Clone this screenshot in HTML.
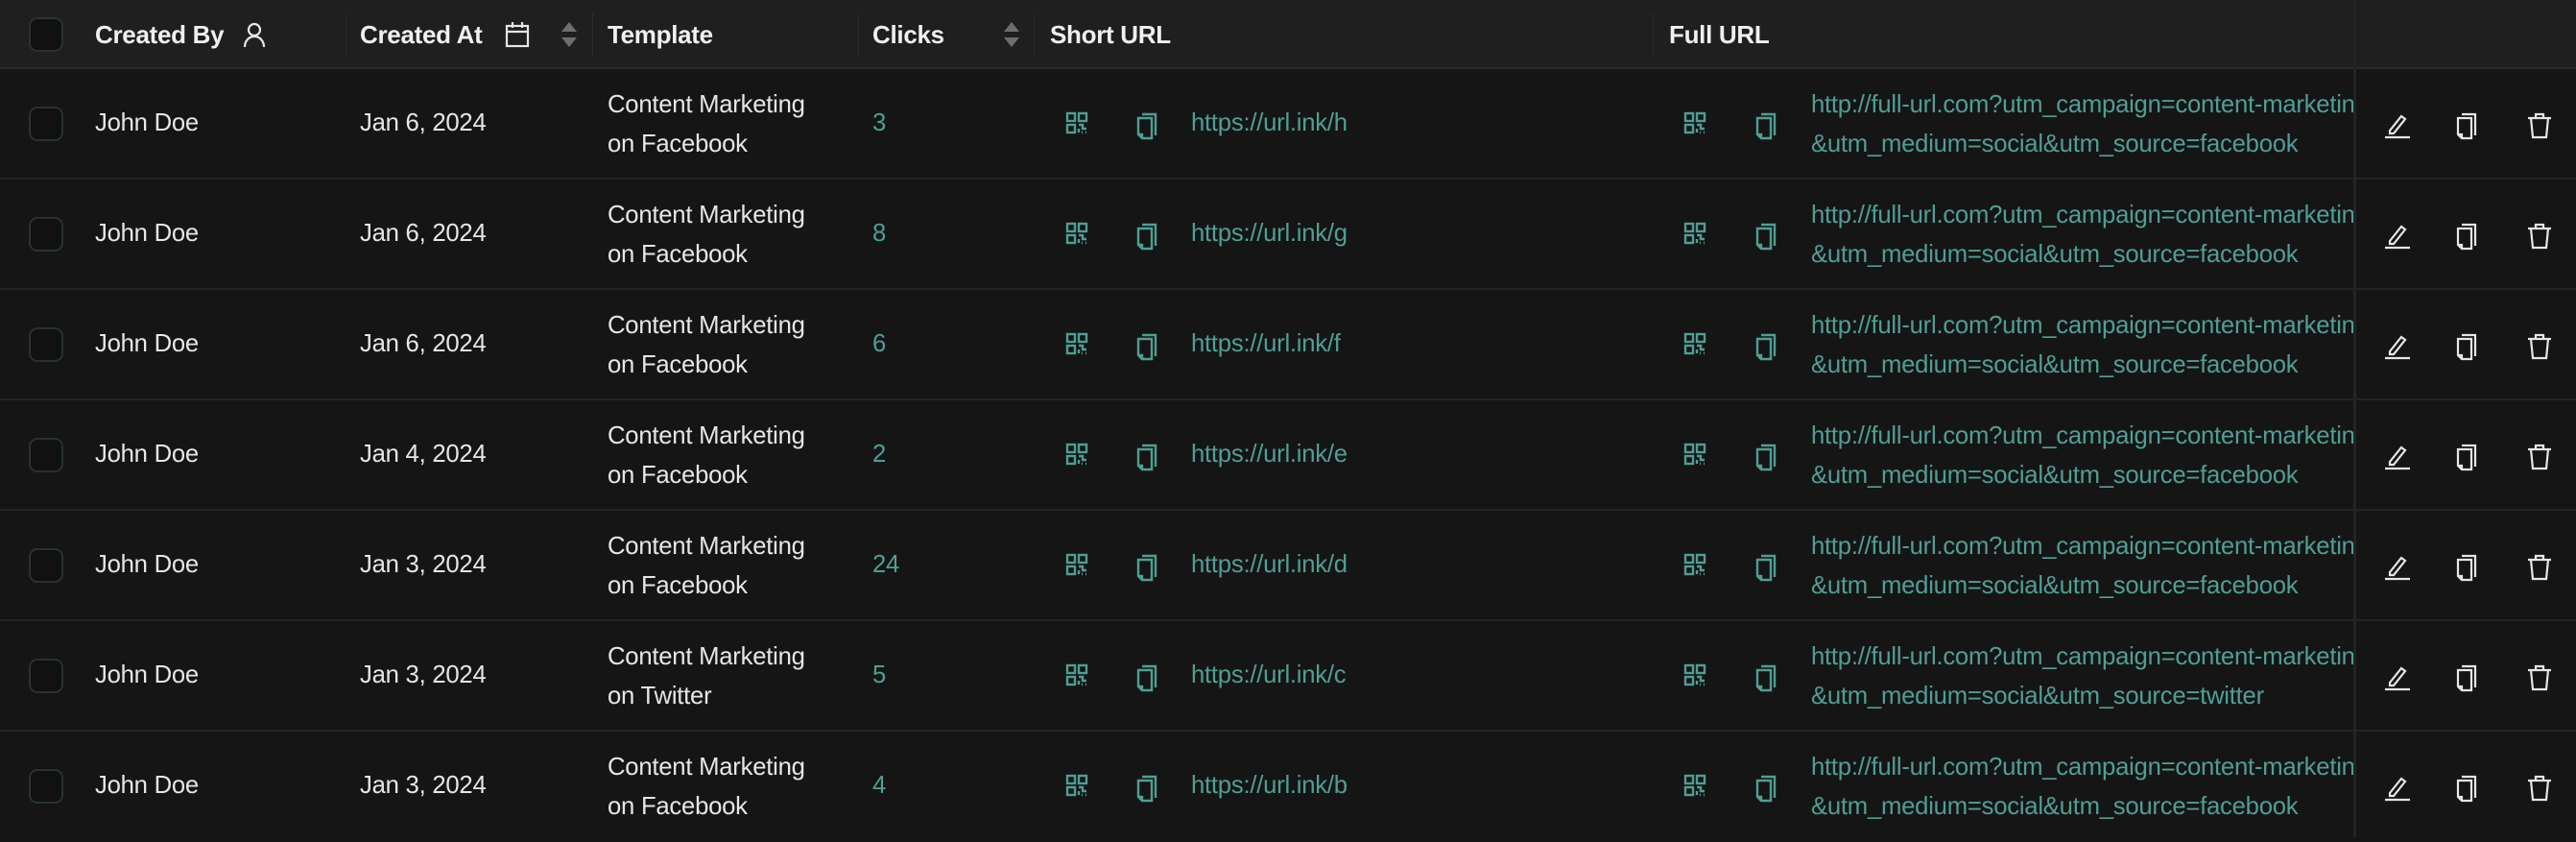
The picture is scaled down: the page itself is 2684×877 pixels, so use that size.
<!DOCTYPE html>
<html><head><meta charset="utf-8">
<style>
*{margin:0;padding:0;box-sizing:border-box}
body{width:2684px;height:872px;background:#151515;overflow:hidden;font-family:"Liberation Sans",sans-serif;color:#e6e6e6;position:relative}
.hdr{position:absolute;left:0;top:0;width:2684px;height:72px;background:#1f1f1f;border-bottom:2px solid #2a2a2a}
.hdr .t{position:absolute;top:0;line-height:72px;font-size:26px;font-weight:bold;color:#f0f0f0;letter-spacing:-0.3px}
.vd{position:absolute;top:14px;width:1px;height:44px;background:#2c2c2c}
.cb{position:absolute;left:30px;width:36px;height:36px;border:2px solid #27332f;border-radius:9px;background:#111}
.row{position:absolute;left:0;width:2684px;height:115px;border-bottom:2px solid #242424;background:#151515}
.row .t{position:absolute;font-size:25.7px;letter-spacing:-0.25px}
.one{top:0;line-height:113px}
.two{top:17px;line-height:41px}
.teal{color:#4f9e94}
.ic{position:absolute;top:44px}
</style></head><body>
<div class="hdr">
<div class="cb" style="top:18px"></div>
<div class="t" style="left:99px">Created By</div>
<svg style="position:absolute;left:252px;top:22px" width="26" height="28" viewBox="0 0 26 28" fill="none" stroke="#e6e6e6" stroke-width="2.2"><circle cx="13" cy="9" r="6"/><path d="M3 27c0-6 4-11 10-11s10 5 10 11"/></svg>
<div class="vd" style="left:360px"></div>
<div class="t" style="left:375px">Created At</div>
<svg style="position:absolute;left:526px;top:22px" width="26" height="28" viewBox="0 0 26 28" fill="none" stroke="#e6e6e6" stroke-width="2.2"><rect x="2" y="5" width="22" height="21"/><path d="M2 11h22M8 1v6M18 1v6"/></svg>
<svg style="position:absolute;left:584px;top:23px" width="18" height="26" viewBox="0 0 18 26"><path d="M9 0L17 10H1Z M9 26L17 16H1Z" fill="#6e6e6e"/></svg>
<div class="vd" style="left:617px"></div>
<div class="t" style="left:633px">Template</div>
<div class="vd" style="left:894px"></div>
<div class="t" style="left:909px">Clicks</div>
<svg style="position:absolute;left:1045px;top:23px" width="18" height="26" viewBox="0 0 18 26"><path d="M9 0L17 10H1Z M9 26L17 16H1Z" fill="#6e6e6e"/></svg>
<div class="vd" style="left:1077px"></div>
<div class="t" style="left:1094px">Short URL</div>
<div class="vd" style="left:1722px"></div>
<div class="t" style="left:1739px">Full URL</div>
</div>

<svg width="0" height="0" style="position:absolute">
<defs>
<g id="qr" fill="none" stroke="#4f9e94" stroke-width="2.4"><rect x="2" y="2" width="8" height="8"/><rect x="14" y="2" width="8" height="8"/><rect x="2" y="14" width="8" height="8"/><path d="M14 14h4v4h4M14 18v4M17 22h1M21 22h1"/></g>
<g id="cp" fill="none" stroke-width="2.4"><path d="M7 3h14v22"/><path d="M3 7h14v21H7l-4-4Z"/><path d="M3 24h4v4"/></g>
</defs></svg>

<div class="row" style="top:72px">
<div class="cb" style="top:39px"></div>
<div class="t one" style="left:99px">John Doe</div>
<div class="t one" style="left:375px">Jan 6, 2024</div>
<div class="t two" style="left:633px">Content Marketing<br>on Facebook</div>
<div class="t one teal" style="left:909px">3</div>
<svg class="ic" style="left:1110px" width="26" height="26"><use href="#qr"/></svg>
<svg class="ic" style="left:1183px" width="26" height="30"><use href="#cp" stroke="#4f9e94"/></svg>
<div class="t one teal" style="left:1241px">https://url.ink/h</div>
<svg class="ic" style="left:1754px" width="26" height="26"><use href="#qr"/></svg>
<svg class="ic" style="left:1828px" width="26" height="30"><use href="#cp" stroke="#4f9e94"/></svg>
<div class="t two teal" style="left:1887px;width:565px;overflow:hidden;white-space:nowrap">http://full-url.com?utm_campaign=content-marketing<br>&amp;utm_medium=social&amp;utm_source=facebook</div>
</div>

<div class="row" style="top:187px">
<div class="cb" style="top:39px"></div>
<div class="t one" style="left:99px">John Doe</div>
<div class="t one" style="left:375px">Jan 6, 2024</div>
<div class="t two" style="left:633px">Content Marketing<br>on Facebook</div>
<div class="t one teal" style="left:909px">8</div>
<svg class="ic" style="left:1110px" width="26" height="26"><use href="#qr"/></svg>
<svg class="ic" style="left:1183px" width="26" height="30"><use href="#cp" stroke="#4f9e94"/></svg>
<div class="t one teal" style="left:1241px">https://url.ink/g</div>
<svg class="ic" style="left:1754px" width="26" height="26"><use href="#qr"/></svg>
<svg class="ic" style="left:1828px" width="26" height="30"><use href="#cp" stroke="#4f9e94"/></svg>
<div class="t two teal" style="left:1887px;width:565px;overflow:hidden;white-space:nowrap">http://full-url.com?utm_campaign=content-marketing<br>&amp;utm_medium=social&amp;utm_source=facebook</div>
</div>

<div class="row" style="top:302px">
<div class="cb" style="top:39px"></div>
<div class="t one" style="left:99px">John Doe</div>
<div class="t one" style="left:375px">Jan 6, 2024</div>
<div class="t two" style="left:633px">Content Marketing<br>on Facebook</div>
<div class="t one teal" style="left:909px">6</div>
<svg class="ic" style="left:1110px" width="26" height="26"><use href="#qr"/></svg>
<svg class="ic" style="left:1183px" width="26" height="30"><use href="#cp" stroke="#4f9e94"/></svg>
<div class="t one teal" style="left:1241px">https://url.ink/f</div>
<svg class="ic" style="left:1754px" width="26" height="26"><use href="#qr"/></svg>
<svg class="ic" style="left:1828px" width="26" height="30"><use href="#cp" stroke="#4f9e94"/></svg>
<div class="t two teal" style="left:1887px;width:565px;overflow:hidden;white-space:nowrap">http://full-url.com?utm_campaign=content-marketing<br>&amp;utm_medium=social&amp;utm_source=facebook</div>
</div>

<div class="row" style="top:417px">
<div class="cb" style="top:39px"></div>
<div class="t one" style="left:99px">John Doe</div>
<div class="t one" style="left:375px">Jan 4, 2024</div>
<div class="t two" style="left:633px">Content Marketing<br>on Facebook</div>
<div class="t one teal" style="left:909px">2</div>
<svg class="ic" style="left:1110px" width="26" height="26"><use href="#qr"/></svg>
<svg class="ic" style="left:1183px" width="26" height="30"><use href="#cp" stroke="#4f9e94"/></svg>
<div class="t one teal" style="left:1241px">https://url.ink/e</div>
<svg class="ic" style="left:1754px" width="26" height="26"><use href="#qr"/></svg>
<svg class="ic" style="left:1828px" width="26" height="30"><use href="#cp" stroke="#4f9e94"/></svg>
<div class="t two teal" style="left:1887px;width:565px;overflow:hidden;white-space:nowrap">http://full-url.com?utm_campaign=content-marketing<br>&amp;utm_medium=social&amp;utm_source=facebook</div>
</div>

<div class="row" style="top:532px">
<div class="cb" style="top:39px"></div>
<div class="t one" style="left:99px">John Doe</div>
<div class="t one" style="left:375px">Jan 3, 2024</div>
<div class="t two" style="left:633px">Content Marketing<br>on Facebook</div>
<div class="t one teal" style="left:909px">24</div>
<svg class="ic" style="left:1110px" width="26" height="26"><use href="#qr"/></svg>
<svg class="ic" style="left:1183px" width="26" height="30"><use href="#cp" stroke="#4f9e94"/></svg>
<div class="t one teal" style="left:1241px">https://url.ink/d</div>
<svg class="ic" style="left:1754px" width="26" height="26"><use href="#qr"/></svg>
<svg class="ic" style="left:1828px" width="26" height="30"><use href="#cp" stroke="#4f9e94"/></svg>
<div class="t two teal" style="left:1887px;width:565px;overflow:hidden;white-space:nowrap">http://full-url.com?utm_campaign=content-marketing<br>&amp;utm_medium=social&amp;utm_source=facebook</div>
</div>

<div class="row" style="top:647px">
<div class="cb" style="top:39px"></div>
<div class="t one" style="left:99px">John Doe</div>
<div class="t one" style="left:375px">Jan 3, 2024</div>
<div class="t two" style="left:633px">Content Marketing<br>on Twitter</div>
<div class="t one teal" style="left:909px">5</div>
<svg class="ic" style="left:1110px" width="26" height="26"><use href="#qr"/></svg>
<svg class="ic" style="left:1183px" width="26" height="30"><use href="#cp" stroke="#4f9e94"/></svg>
<div class="t one teal" style="left:1241px">https://url.ink/c</div>
<svg class="ic" style="left:1754px" width="26" height="26"><use href="#qr"/></svg>
<svg class="ic" style="left:1828px" width="26" height="30"><use href="#cp" stroke="#4f9e94"/></svg>
<div class="t two teal" style="left:1887px;width:565px;overflow:hidden;white-space:nowrap">http://full-url.com?utm_campaign=content-marketing<br>&amp;utm_medium=social&amp;utm_source=twitter</div>
</div>

<div class="row" style="top:762px;border-bottom:none">
<div class="cb" style="top:39px"></div>
<div class="t one" style="left:99px">John Doe</div>
<div class="t one" style="left:375px">Jan 3, 2024</div>
<div class="t two" style="left:633px">Content Marketing<br>on Facebook</div>
<div class="t one teal" style="left:909px">4</div>
<svg class="ic" style="left:1110px" width="26" height="26"><use href="#qr"/></svg>
<svg class="ic" style="left:1183px" width="26" height="30"><use href="#cp" stroke="#4f9e94"/></svg>
<div class="t one teal" style="left:1241px">https://url.ink/b</div>
<svg class="ic" style="left:1754px" width="26" height="26"><use href="#qr"/></svg>
<svg class="ic" style="left:1828px" width="26" height="30"><use href="#cp" stroke="#4f9e94"/></svg>
<div class="t two teal" style="left:1887px;width:565px;overflow:hidden;white-space:nowrap">http://full-url.com?utm_campaign=content-marketing<br>&amp;utm_medium=social&amp;utm_source=facebook</div>
</div>

<div style="position:absolute;left:2452px;top:0;width:3px;height:872px;background:#232323"></div>
<svg style="position:absolute;left:0;top:0" width="2684" height="872" fill="none">
<g stroke="#e6e6e6" stroke-width="2.2">
<path id="ed" d="M2490 136L2502 121l4 3L2494 139H2490Z M2485 143h26"/>
<use href="#ed" y="115"/><use href="#ed" y="230"/><use href="#ed" y="345"/><use href="#ed" y="460"/><use href="#ed" y="575"/><use href="#ed" y="690"/>
<path id="tr" d="M2634 123h24M2642 123V119h8v4M2637 123l2 20h14l2-20"/>
<use href="#tr" y="115"/><use href="#tr" y="230"/><use href="#tr" y="345"/><use href="#tr" y="460"/><use href="#tr" y="575"/><use href="#tr" y="690"/>
<g id="c2" transform="translate(2558,116)"><path d="M7 3h14v22"/><path d="M3 7h14v21H7l-4-4Z"/><path d="M3 24h4v4"/></g>
<use href="#c2" y="115"/><use href="#c2" y="230"/><use href="#c2" y="345"/><use href="#c2" y="460"/><use href="#c2" y="575"/><use href="#c2" y="690"/>
</g>
</svg>
</body></html>
